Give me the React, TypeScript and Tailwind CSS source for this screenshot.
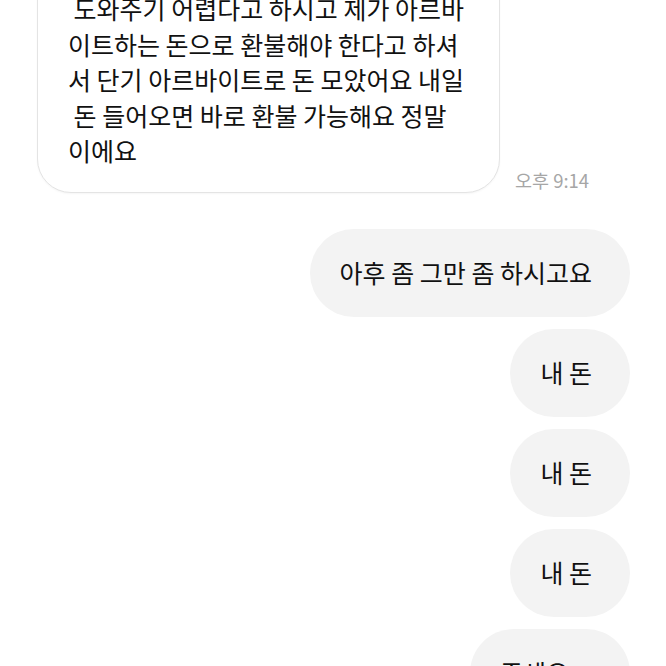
export default function App() {
  const lines = [
    " 도와주기 어렵다고 하시고 제가 아르바",
    "이트하는 돈으로 환불해야 한다고 하셔",
    "서 단기 아르바이트로 돈 모았어요 내일",
    " 돈 들어오면 바로 환불 가능해요 정말",
    "이에요",
  ];
  const mine = ["아후 좀 그만 좀 하시고요", "내 돈", "내 돈", "내 돈", "주세요ㅆ"];

  return (
    <div className="h-[666px] w-[666px] overflow-hidden bg-white font-['Noto_Sans_CJK_KR','Noto_Sans',sans-serif] text-[#111111]">
      <div className="-mt-[34px] flex items-end pl-[37px]">
        <div className="w-[463px] rounded-[34px] border border-[#e4e4e4] bg-white px-[30px] pb-[23px] pt-[24px] text-[25px] leading-[35.5px] shadow-[0_1px_2px_rgba(0,0,0,0.04)]">
          {lines.map((line, i) => (
            <div key={i} className="whitespace-pre">
              {line}
            </div>
          ))}
        </div>
        <span className="mb-[3px] ml-[15px] text-[18.5px] leading-[20px] text-[#a6a6a6]">오후 9:14</span>
      </div>

      <div className="mt-[36px] flex flex-col items-end gap-[12px] pr-[36px]">
        {mine.map((text, i) => (
          <div key={i} className="flex h-[88px] items-center whitespace-pre rounded-full bg-[#f3f3f3] pl-[30px] pr-[38px] text-[25px]">
            {text}
          </div>
        ))}
      </div>
    </div>
  );
}
